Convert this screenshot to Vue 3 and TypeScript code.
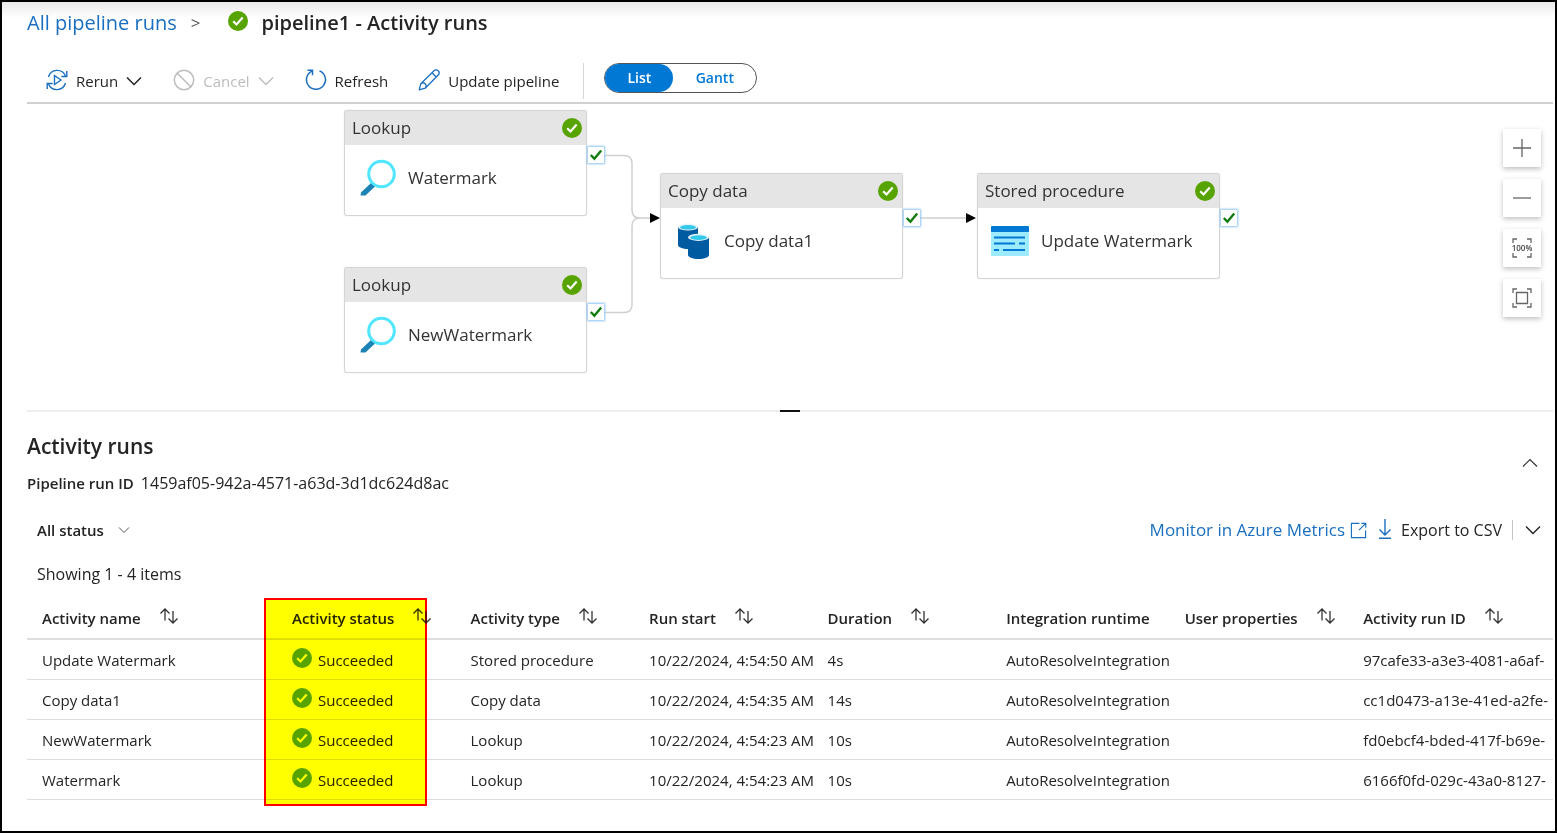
<script setup lang="ts">
import { ref } from 'vue'

interface PipelineNode {
  id: string
  kind: string
  label: string
  icon: 'lookup' | 'copy' | 'procedure'
  x: number
  y: number
}

interface Run {
  name: string
  type: string
  start: string
  duration: string
  runtime: string
  id: string
}

const view = ref<'List' | 'Gantt'>('List')
const status = ref('All status')

const nodes: PipelineNode[] = [
  { id: 'n1', kind: 'Lookup', label: 'Watermark', icon: 'lookup', x: 317, y: 6 },
  { id: 'n2', kind: 'Lookup', label: 'NewWatermark', icon: 'lookup', x: 317, y: 163 },
  { id: 'n3', kind: 'Copy data', label: 'Copy data1', icon: 'copy', x: 633, y: 69 },
  { id: 'n4', kind: 'Stored procedure', label: 'Update Watermark', icon: 'procedure', x: 950, y: 69 },
]

const columns = [
  { title: 'Activity name', sort: true },
  { title: 'Activity status', sort: true },
  { title: 'Activity type', sort: true },
  { title: 'Run start', sort: true },
  { title: 'Duration', sort: true },
  { title: 'Integration runtime', sort: false },
  { title: 'User properties', sort: true },
  { title: 'Activity run ID', sort: true },
]

const runtime = 'AutoResolveIntegration'
const runs: Run[] = [
  { name: 'Update Watermark', type: 'Stored procedure', start: '10/22/2024, 4:54:50 AM', duration: '4s', runtime, id: '97cafe33-a3e3-4081-a6af-' },
  { name: 'Copy data1', type: 'Copy data', start: '10/22/2024, 4:54:35 AM', duration: '14s', runtime, id: 'cc1d0473-a13e-41ed-a2fe-' },
  { name: 'NewWatermark', type: 'Lookup', start: '10/22/2024, 4:54:23 AM', duration: '10s', runtime, id: 'fd0ebcf4-bded-417f-b69e-' },
  { name: 'Watermark', type: 'Lookup', start: '10/22/2024, 4:54:23 AM', duration: '10s', runtime, id: '6166f0fd-029c-43a0-8127-' },
]
</script>

<template>
  <div class="page">
    <nav class="crumbs" aria-label="Breadcrumb">
      <a href="#runs">All pipeline runs</a>
      <span class="sep">&gt;</span>
      <svg class="ok" viewBox="0 0 20 20"><circle cx="10" cy="10" r="10" fill="#57a300" /><path d="M5.2 10.2l3.300 3.300 6.200-7" fill="none" stroke="#fff" stroke-width="2.200" /></svg>
      <h1>pipeline1 - Activity runs</h1>
    </nav>

    <div class="toolbar">
      <button type="button" class="cmd">
        <svg class="ico" viewBox="0 0 22 22" fill="none" stroke="#1a6fc0" stroke-width="1.400">
          <path d="M2.500 8a9 9 0 0 1 17-1M19.500 14a9 9 0 0 1-17 1" />
          <path d="M20.800 2v5.500h-5.500M1.200 20v-5.500h5.500" />
          <path d="M8.500 6.500v9l6.500-4.500z" />
        </svg>
        <span>Rerun</span>
        <svg class="chev" viewBox="0 0 16 10" fill="none" stroke="#222" stroke-width="1.500"><path d="M1 1.500l7 7 7-7" /></svg>
      </button>
      <button type="button" class="cmd off" disabled>
        <svg class="ico" viewBox="0 0 22 22" fill="none" stroke="#bdbdbd" stroke-width="1.500"><circle cx="11" cy="11" r="9.700" /><path d="M4.200 4.200l13.600 13.600" /></svg>
        <span>Cancel</span>
        <svg class="chev" viewBox="0 0 16 10" fill="none" stroke="#bdbdbd" stroke-width="1.500"><path d="M1 1.500l7 7 7-7" /></svg>
      </button>
      <button type="button" class="cmd">
        <svg class="ico" viewBox="0 0 22 22" fill="none" stroke="#1a6fc0" stroke-width="1.500"><path d="M14.500 1.900a9.500 9.500 0 1 1-7.500.2" /><path d="M2.500 1.300h5v5" /></svg>
        <span>Refresh</span>
      </button>
      <button type="button" class="cmd">
        <svg class="ico" viewBox="0 0 22 22" fill="none" stroke="#1a6fc0" stroke-width="1.300" stroke-linejoin="round"><path d="M1.200 20.800l1.600-6L16 1.800a2.700 2.700 0 0 1 4.200 4.200L7.200 19.200zM14 3.800l4.200 4.200M2.800 14.800a3 3 0 0 1 4.400 4.400" /></svg>
        <span>Update pipeline</span>
      </button>
      <span class="bar"></span>
      <div class="toggle" role="group" aria-label="View">
        <button type="button" :class="{ on: view === 'List' }" @click="view = 'List'">List</button>
        <button type="button" :class="{ on: view === 'Gantt' }" @click="view = 'Gantt'">Gantt</button>
      </div>
    </div>

    <section class="canvas" aria-label="Pipeline diagram">
      <svg class="edges" width="1240" height="300" fill="none" stroke="#d0d0d0" stroke-width="1.500">
        <path d="M577 51.500h20q8 0 8 8v46.500q0 8 8 8h11M577 208.500h20q8 0 8-8v-78.500q0-8 8-8M893 114h48" />
        <path d="M623 109l10 5-10 5zM939 109l10 5-10 5z" fill="#000" stroke="none" />
      </svg>
      <article v-for="n in nodes" :key="n.id" class="node" :style="{ left: n.x + 'px', top: n.y + 'px' }">
        <header>
          <span>{{ n.kind }}</span>
          <svg class="ok" viewBox="0 0 20 20"><circle cx="10" cy="10" r="10" fill="#57a300" /><path d="M5.200 10.200l3.300 3.300 6.200-7" fill="none" stroke="#fff" stroke-width="2.200" /></svg>
        </header>
        <div class="body">
          <svg v-if="n.icon === 'lookup'" class="art" viewBox="0 0 40 40" fill="none">
            <path d="M2.500 37.500h5L17 28.500l-3.500-4L3 34.500z" fill="#1b84b4" />
            <circle cx="23.500" cy="16" r="12.800" stroke="#50e6ff" stroke-width="3" />
          </svg>
          <svg v-else-if="n.icon === 'copy'" class="art" viewBox="0 0 40 40">
            <path d="M4 6v18c0 2.200 4.500 4 10 4s10-1.800 10-4V6z" fill="#005ba1" />
            <ellipse cx="14" cy="6" rx="10" ry="3.600" fill="#e6f3fa" /><ellipse cx="14" cy="6.300" rx="8" ry="2.300" fill="#32c8ea" />
            <path d="M14 16v18c0 2.200 4.500 4 10.500 4S35 36.200 35 34V16z" fill="#005ba1" />
            <ellipse cx="24.500" cy="16.300" rx="10.500" ry="3.600" fill="#e6f3fa" /><ellipse cx="24.500" cy="16.600" rx="8.300" ry="2.300" fill="#32c8ea" />
          </svg>
          <svg v-else class="art" viewBox="0 0 40 40">
            <rect x="0" y="5" width="38" height="30" rx="1" fill="#9cebff" />
            <path d="M0 11V6a1 1 0 0 1 1-1h36a1 1 0 0 1 1 1v5z" fill="#0078d4" />
            <path d="M3 16.500h31M3 22.500h21M28 22.500h6M3 29h5M12 29h22" stroke="#0078d4" stroke-width="2" />
          </svg>
          <span>{{ n.label }}</span>
        </div>
        <svg class="port" viewBox="0 0 16 16"><path d="M2.800 8l3.600 3.800 6.800-8.300" fill="none" stroke="#107c10" stroke-width="2.400" /></svg>
      </article>

      <div class="zoom">
        <button type="button" aria-label="Zoom in"><svg viewBox="0 0 20 20"><path d="M10 1v18M1 10h18" /></svg></button>
        <button type="button" aria-label="Zoom out"><svg viewBox="0 0 20 20"><path d="M1 10h18" /></svg></button>
        <button type="button" aria-label="Zoom to 100%"><svg viewBox="0 0 20 20"><path d="M1 5V1h4M15 1h4v4M19 15v4h-4M5 19H1v-4" /><text x="10" y="13" text-anchor="middle">100%</text></svg></button>
        <button type="button" aria-label="Zoom to fit"><svg viewBox="0 0 20 20"><path d="M1 5V1h4M15 1h4v4M19 15v4h-4M5 19H1v-4M4.500 4.500h11v11h-11z" /></svg></button>
      </div>
    </section>

    <div class="splitter"><span></span></div>

    <section class="runs">
      <div class="heading">
        <div>
          <h2>Activity runs</h2>
          <p class="runid"><b>Pipeline run ID</b><span class="guid">1459af05-942a-4571-a63d-3d1dc624d8ac</span></p>
        </div>
        <button type="button" class="plain" aria-label="Collapse"><svg class="chev" viewBox="0 0 16 10" fill="none" stroke="#333" stroke-width="1.200"><path d="M1 8.500l7-7 7 7" /></svg></button>
      </div>

      <div class="filters">
        <label class="status">
          <select v-model="status" aria-label="Status filter">
            <option>All status</option>
            <option>Succeeded</option>
            <option>Failed</option>
          </select>
          <svg class="small" viewBox="0 0 12 8" fill="none" stroke="#555"><path d="M1 1.500l5 5 5-5" /></svg>
        </label>
        <div class="actions">
          <a href="#metrics">Monitor in Azure Metrics
            <svg class="ext" viewBox="0 0 18 18" fill="none" stroke="#1a6fc0" stroke-width="1.200"><path d="M10 1.500H1.500v15h15V9M12 1.500h4.700v4.700M16.500 1.700L9.500 8.700" /></svg>
          </a>
          <button type="button" class="plain export">
            <svg class="down" viewBox="0 0 14 20" fill="none" stroke="#1a6fc0" stroke-width="1.400"><path d="M7 0v16M1.500 10.500L7 16l5.500-5.500M1 19.200h12" /></svg>
            <span>Export to CSV</span>
          </button>
          <span class="rule"></span>
          <button type="button" class="plain" aria-label="More export options"><svg class="chev" viewBox="0 0 16 10" fill="none" stroke="#222" stroke-width="1.400"><path d="M1 1.500l7 7 7-7" /></svg></button>
        </div>
      </div>

      <p class="count">Showing 1 - 4 items</p>

      <div class="grid">
        <table>
          <colgroup><col class="first" /><col v-for="i in 6" :key="i" class="mid" /><col /></colgroup>
          <thead>
            <tr>
              <th v-for="c in columns" :key="c.title" scope="col">
                <div class="th">
                  <span>{{ c.title }}</span>
                  <svg v-if="c.sort" viewBox="0 0 20 16" fill="none" stroke="#333" stroke-width="1.300"><path d="M6 12.500V1M1.500 5.500L6 1l4.500 4.500M14 3v12M9.500 10.500L14 15l4.500-4.500" /></svg>
                </div>
              </th>
            </tr>
          </thead>
          <tbody>
            <tr v-for="r in runs" :key="r.id">
              <td>{{ r.name }}</td>
              <td>
                <div class="state">
                  <svg class="ok" viewBox="0 0 20 20"><circle cx="10" cy="10" r="10" fill="#57a300" /><path d="M5.200 10.200l3.300 3.300 6.200-7" fill="none" stroke="#fff" stroke-width="2.200" /></svg>
                  <span>Succeeded</span>
                </div>
              </td>
              <td>{{ r.type }}</td>
              <td><div class="clip">{{ r.start }}</div></td>
              <td>{{ r.duration }}</td>
              <td><div class="clip">{{ r.runtime }}</div></td>
              <td></td>
              <td><div class="clip">{{ r.id }}</div></td>
            </tr>
          </tbody>
        </table>
        <div class="marker"></div>
      </div>
    </section>
  </div>
</template>

<style>
body {
  margin: 0;
}
</style>

<style scoped>
.page {
  box-sizing: border-box;
  min-height: 100vh;
  border: 2px solid #000;
  padding: 0 2px 0 25px;
  background: linear-gradient(#e9e9e9, #fff 16px);
  color: #242424;
  font: 15px/20px "Open Sans", "Noto Sans", sans-serif;
}
svg {
  display: block;
  flex: none;
}
a {
  color: #1a6fc0;
  text-decoration: none;
}
button {
  border: 0;
  padding: 0;
  background: none;
  color: inherit;
  font: inherit;
}
.ok {
  width: 20px;
  height: 20px;
}
.chev {
  width: 16px;
  height: 10px;
}
.crumbs {
  display: flex;
  align-items: center;
  height: 41px;
  font-size: 20px;
}
.crumbs .ok {
  margin-bottom: 3px;
}
.sep {
  margin: 0 28px 0 14px;
  color: #555;
  font-size: 17px;
}
h1 {
  margin: 0 0 0 13px;
  font-size: 20px;
  font-weight: 600;
}
.toolbar {
  display: flex;
  align-items: center;
  height: 42px;
  padding: 17px 0 0 19px;
  border-bottom: 2px solid #d0d0d0;
}
.cmd {
  display: flex;
  align-items: center;
  gap: 8px;
  margin-right: 30px;
}
.cmd .chev {
  margin-right: 1px;
}
.ico {
  width: 22px;
  height: 22px;
  margin-bottom: 2px;
}
.off {
  color: #bdbdbd;
}
.bar {
  width: 1px;
  height: 36px;
  margin: 0 20px 0 -6px;
  background: #d6d6d6;
}
.toggle {
  display: flex;
  box-sizing: border-box;
  height: 30px;
  margin-bottom: 6px;
  border: 1px solid #555;
  border-radius: 15px;
}
.toggle button {
  width: 83px;
  color: #0078d4;
  font-size: 14px;
  font-weight: 600;
}
.toggle button:first-child {
  width: 68px;
}
.toggle .on {
  border-radius: 14px;
  background: #0078d4;
  color: #fff;
}
.canvas {
  position: relative;
  height: 306px;
  overflow: hidden;
}
.edges {
  position: absolute;
  left: 0;
  top: 0;
}
.node {
  position: absolute;
  box-sizing: border-box;
  width: 243px;
  height: 106px;
  border: 1px solid #d4d4d4;
  border-radius: 3px;
  background: #fff;
  box-shadow: 0 0 1px #ccc;
  color: #333;
  font-size: 17px;
}
.node header {
  display: flex;
  align-items: center;
  justify-content: space-between;
  height: 34px;
  padding: 0 4px 0 7px;
  background: #e5e5e5;
}
.body {
  display: flex;
  align-items: center;
  gap: 10px;
  padding: 13px;
}
.art {
  width: 40px;
  height: 40px;
}
.port {
  position: absolute;
  left: 243px;
  top: 36px;
  width: 16px;
  height: 16px;
  background: #fff;
  box-shadow: 0 0 2px 1px #8cc4f2;
}
.zoom {
  position: absolute;
  right: 12px;
  top: 25px;
  display: grid;
  gap: 12px;
}
.zoom button {
  display: grid;
  place-items: center;
  width: 38px;
  height: 38px;
  background: #fff;
  box-shadow: 0 2px 5px #00000040;
}
.zoom svg {
  width: 20px;
  height: 20px;
  fill: none;
  stroke: #666;
  stroke-width: 1.3;
}
.zoom text {
  fill: #444;
  stroke: none;
  font-size: 8px;
  font-weight: 600;
}
.splitter {
  display: flex;
  justify-content: center;
  height: 2px;
  background: #eee;
}
.splitter span {
  width: 20px;
  background: #111;
}
.heading {
  display: flex;
  align-items: center;
  justify-content: space-between;
  padding: 20px 15px 0 0;
}
h2 {
  margin: 0;
  font-size: 21px;
  font-weight: 600;
  line-height: 28px;
}
.runid {
  display: flex;
  gap: 7px;
  margin: 13px 0 0;
}
.guid,
.count,
.export {
  font-size: 16px;
}
b,
th {
  font-weight: 600;
}
.filters {
  display: flex;
  align-items: center;
  justify-content: space-between;
  height: 32px;
  margin-top: 21px;
  padding: 0 12px 0 10px;
}
.status {
  display: flex;
  align-items: center;
}
select {
  appearance: none;
  width: 81px;
  border: 0;
  padding: 0;
  background: none;
  color: inherit;
  font: inherit;
  font-weight: 600;
}
.small {
  width: 12px;
  height: 8px;
}
.actions,
.actions a,
.export {
  display: flex;
  align-items: center;
}
.actions a {
  gap: 5px;
  margin-right: 11px;
  font-size: 17px;
}
.ext {
  width: 17px;
  height: 17px;
}
.export {
  gap: 9px;
}
.down {
  width: 14px;
  height: 20px;
  margin-bottom: 2px;
}
.rule {
  width: 1px;
  height: 20px;
  margin: 0 12px 0 10px;
  background: #c4c4c4;
}
.count {
  margin: 18px 0 0 10px;
}
.grid {
  position: relative;
  margin-top: 14px;
}
table {
  width: 100%;
  table-layout: fixed;
  border-collapse: separate;
  border-spacing: 0;
}
.first {
  width: 250px;
}
.mid {
  width: 11.7%;
}
th,
td {
  box-sizing: border-box;
  height: 40px;
  padding: 0 0 0 15px;
  border-bottom: 1px solid #dedede;
  text-align: left;
  white-space: nowrap;
}
th {
  height: 42px;
  border-bottom-width: 2px;
}
.th {
  display: flex;
  align-items: center;
  gap: 18px;
}
.th svg {
  width: 20px;
  height: 16px;
  margin-bottom: 4px;
}
.state {
  display: flex;
  align-items: center;
  gap: 6px;
}
.state .ok {
  margin-bottom: 4px;
}
.clip {
  overflow: hidden;
}
.marker {
  position: absolute;
  left: 237px;
  top: 0;
  box-sizing: border-box;
  width: 163px;
  height: 208px;
  border: 2px solid #f00;
  background: #ff0;
  mix-blend-mode: multiply;
  pointer-events: none;
}
</style>
